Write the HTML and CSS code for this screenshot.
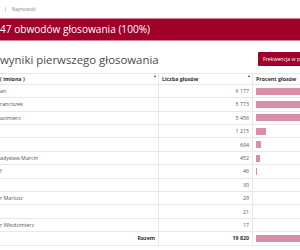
FILE: index.html
```html
<!DOCTYPE html>
<html lang="pl">
<head>
<meta charset="utf-8">
<link rel="stylesheet" href="styles.css">
</head>
<body>
<div class="page">
  <div class="crumbs"><span class="sep">|</span><span>Najnowski</span></div>
  <div class="banner">47 obwodów głosowania (100%)</div>
  <div class="titlebar">
    <h1 class="title">wyniki pierwszego głosowania</h1>
    <div class="btn">Frekwencja w pi</div>
  </div>
  <div class="table">
    <div class="row head">
      <div class="c name">( imiona )<span class="sort"></span></div>
      <div class="c num">Liczba głosów<span class="sort"></span></div>
      <div class="c pct">Procent głosów</div>
    </div>
    <div class="row"><div class="c name">an</div><div class="c num">6 177</div><div class="c pct"><span class="bar" style="width:31.17%"></span></div></div>
    <div class="row"><div class="c name">ranciszek</div><div class="c num">5 773</div><div class="c pct"><span class="bar" style="width:29.13%"></span></div></div>
    <div class="row"><div class="c name">azimierz</div><div class="c num">5 456</div><div class="c pct"><span class="bar" style="width:27.53%"></span></div></div>
    <div class="row"><div class="c name"></div><div class="c num">1 215</div><div class="c pct"><span class="bar" style="width:6.13%"></span></div></div>
    <div class="row"><div class="c name"></div><div class="c num">604</div><div class="c pct"><span class="bar" style="width:3.05%"></span></div></div>
    <div class="row"><div class="c name">adysław Marcin</div><div class="c num">452</div><div class="c pct"><span class="bar" style="width:2.28%"></span></div></div>
    <div class="row"><div class="c name">f</div><div class="c num">46</div><div class="c pct"><span class="bar" style="width:0.6%"></span></div></div>
    <div class="row"><div class="c name"></div><div class="c num">30</div><div class="c pct"></div></div>
    <div class="row"><div class="c name">r Mariusz</div><div class="c num">29</div><div class="c pct"></div></div>
    <div class="row"><div class="c name"></div><div class="c num">21</div><div class="c pct"></div></div>
    <div class="row"><div class="c name">r Włodzimierz</div><div class="c num">17</div><div class="c pct"></div></div>
    <div class="row total"><div class="c name">Razem</div><div class="c num">19 820</div><div class="c pct"><span class="bar" style="width:100%"></span></div></div>
  </div>
</div>
</body>
</html>
```
FILE: styles.css
```css
html, body {
  margin: 0;
  padding: 0;
  background: #fff;
  overflow: hidden;
}
body {
  font-family: "Open Sans", "Liberation Sans", sans-serif;
  color: #444;
}
.page {
  width: 420px;
}
.crumbs {
  height: 18px;
  display: flex;
  align-items: center;
  gap: 5px;
  padding-left: 4px;
  font-size: 5px;
  color: #8a8a8a;
}
.crumbs .sep {
  color: #b0607a;
}
.banner {
  box-sizing: border-box;
  height: 22.5px;
  background: #a1002b;
  border-top: 1px solid #d47f95;
  border-bottom: 1px solid #d47f95;
  color: #fff;
  font-size: 10.1px;
  line-height: 20px;
  white-space: nowrap;
}
.titlebar {
  display: grid;
  grid-template-columns: 258px auto;
  align-items: start;
  height: 32px;
}
.title {
  margin: 0;
  padding-top: 12px;
  font-size: 11.4px;
  font-weight: 400;
  color: #4a4a4a;
  line-height: 14px;
  white-space: nowrap;
}
.btn {
  margin-top: 11px;
  height: 14px;
  background: #a1002b;
  color: #fff;
  font-size: 5.2px;
  line-height: 14px;
  padding-left: 5px;
  white-space: nowrap;
  border-radius: 1px;
}
.table {
  font-size: 5.3px;
  color: #555;
}
.row {
  display: grid;
  grid-template-columns: 158px 95px 1fr;
  height: 13.4px;
  box-sizing: border-box;
  border-bottom: 1px solid #e8e8e8;
}
.row.head {
  height: 12.4px;
  border-top: 1px solid #e8e8e8;
  font-weight: 700;
  color: #333;
}
.c {
  position: relative;
  display: flex;
  align-items: center;
  white-space: nowrap;
}
.num {
  border-left: 1px solid #e8e8e8;
  border-right: 1px solid #e8e8e8;
  justify-content: flex-end;
  padding-right: 3px;
}
.head .num {
  justify-content: flex-start;
  padding-left: 3px;
}
.pct {
  padding-left: 3px;
}
.bar {
  display: block;
  flex: 0 0 auto;
  height: 7px;
  max-width: 96px;
  background: #d98ea6;
}
.sort {
  position: absolute;
  right: 2px;
  top: 1px;
  width: 0;
  height: 0;
  border-left: 1.5px solid transparent;
  border-right: 1.5px solid transparent;
  border-bottom: 2px solid #333;
}
.total {
  font-weight: 700;
  color: #333;
}
.total .name {
  justify-content: flex-end;
  padding-right: 3px;
}
```
